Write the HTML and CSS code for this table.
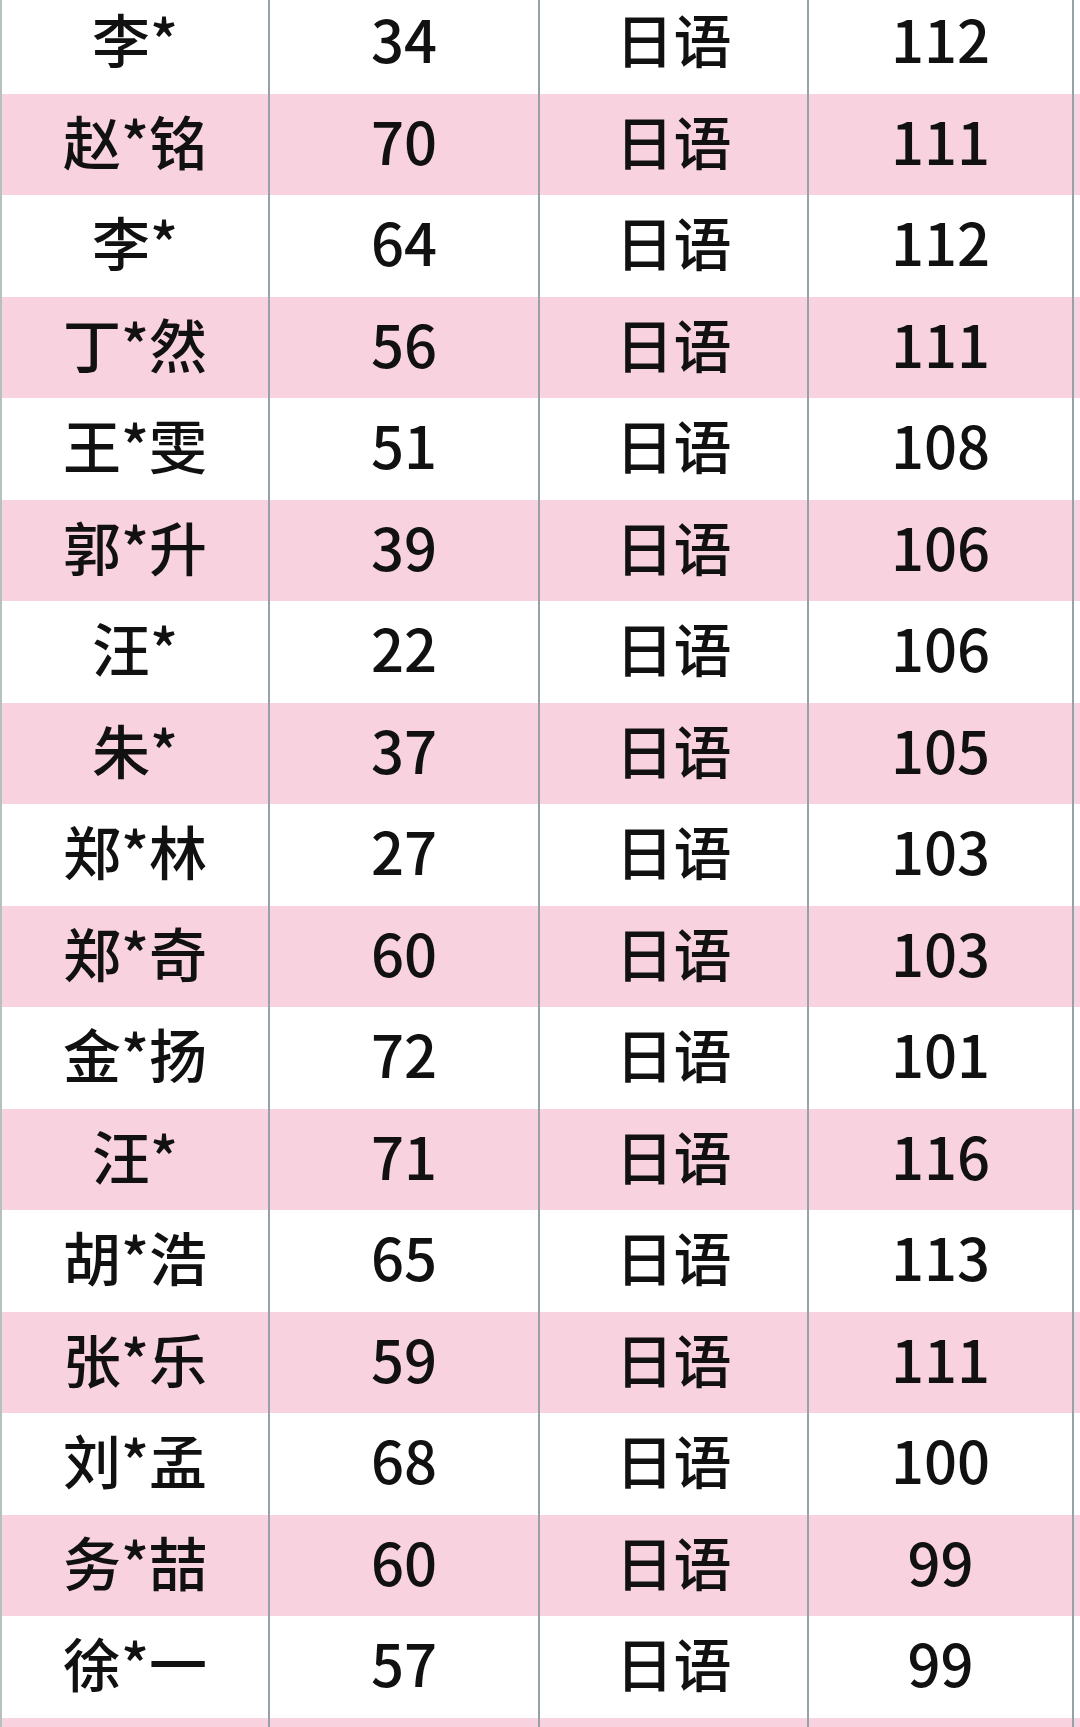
FILE: index.html
```html
<!DOCTYPE html>
<html lang="zh-CN">
<head>
<meta charset="utf-8">
<title>成绩表</title>
<link rel="stylesheet" href="styles.css">
</head>
<body>
<div class="sheet">
  <div class="row first"><div class="cell">李*</div><div class="cell">34</div><div class="cell">日语</div><div class="cell">112</div><div class="cell"></div></div>
  <div class="row alt"><div class="cell">赵*铭</div><div class="cell">70</div><div class="cell">日语</div><div class="cell">111</div><div class="cell"></div></div>
  <div class="row"><div class="cell">李*</div><div class="cell">64</div><div class="cell">日语</div><div class="cell">112</div><div class="cell"></div></div>
  <div class="row alt"><div class="cell">丁*然</div><div class="cell">56</div><div class="cell">日语</div><div class="cell">111</div><div class="cell"></div></div>
  <div class="row"><div class="cell">王*雯</div><div class="cell">51</div><div class="cell">日语</div><div class="cell">108</div><div class="cell"></div></div>
  <div class="row alt"><div class="cell">郭*升</div><div class="cell">39</div><div class="cell">日语</div><div class="cell">106</div><div class="cell"></div></div>
  <div class="row"><div class="cell">汪*</div><div class="cell">22</div><div class="cell">日语</div><div class="cell">106</div><div class="cell"></div></div>
  <div class="row alt"><div class="cell">朱*</div><div class="cell">37</div><div class="cell">日语</div><div class="cell">105</div><div class="cell"></div></div>
  <div class="row"><div class="cell">郑*林</div><div class="cell">27</div><div class="cell">日语</div><div class="cell">103</div><div class="cell"></div></div>
  <div class="row alt"><div class="cell">郑*奇</div><div class="cell">60</div><div class="cell">日语</div><div class="cell">103</div><div class="cell"></div></div>
  <div class="row"><div class="cell">金*扬</div><div class="cell">72</div><div class="cell">日语</div><div class="cell">101</div><div class="cell"></div></div>
  <div class="row alt"><div class="cell">汪*</div><div class="cell">71</div><div class="cell">日语</div><div class="cell">116</div><div class="cell"></div></div>
  <div class="row"><div class="cell">胡*浩</div><div class="cell">65</div><div class="cell">日语</div><div class="cell">113</div><div class="cell"></div></div>
  <div class="row alt"><div class="cell">张*乐</div><div class="cell">59</div><div class="cell">日语</div><div class="cell">111</div><div class="cell"></div></div>
  <div class="row"><div class="cell">刘*孟</div><div class="cell">68</div><div class="cell">日语</div><div class="cell">100</div><div class="cell"></div></div>
  <div class="row alt"><div class="cell">务*喆</div><div class="cell">60</div><div class="cell">日语</div><div class="cell">99</div><div class="cell"></div></div>
  <div class="row"><div class="cell">徐*一</div><div class="cell">57</div><div class="cell">日语</div><div class="cell">99</div><div class="cell"></div></div>
  <div class="row alt tail"><div class="cell"></div><div class="cell"></div><div class="cell"></div><div class="cell"></div><div class="cell"></div></div>
</div>
</body>
</html>
```
FILE: styles.css
```css
html, body {
  margin: 0;
  padding: 0;
  background: #ffffff;
  overflow: hidden;
}

body {
  width: 1080px;
  height: 1727px;
  font-family: "Noto Sans CJK SC", "Noto Sans", sans-serif;
  color: #111111;
}

.sheet {
  display: flex;
  flex-direction: column;
}

.row {
  display: grid;
  grid-template-columns: 268px 270px 269px 265px 1fr;
  height: 101.5px;
  background: #ffffff;
}

.row.alt {
  background: #f8d2df;
}

.row.tail {
  height: 10px;
}

.cell {
  border-left: 2px solid #97a2a6;
  display: flex;
  align-items: center;
  justify-content: center;
  padding-bottom: 9px;
  box-sizing: border-box;
  font-size: 58px;
  font-weight: 500;
  line-height: 1;
  white-space: nowrap;
}

.row.first {
  height: 93.5px;
}

.row.first .cell {
  padding-bottom: 17px;
}

.cell:first-child {
  border-left-color: #b7c0c0;
}
```
